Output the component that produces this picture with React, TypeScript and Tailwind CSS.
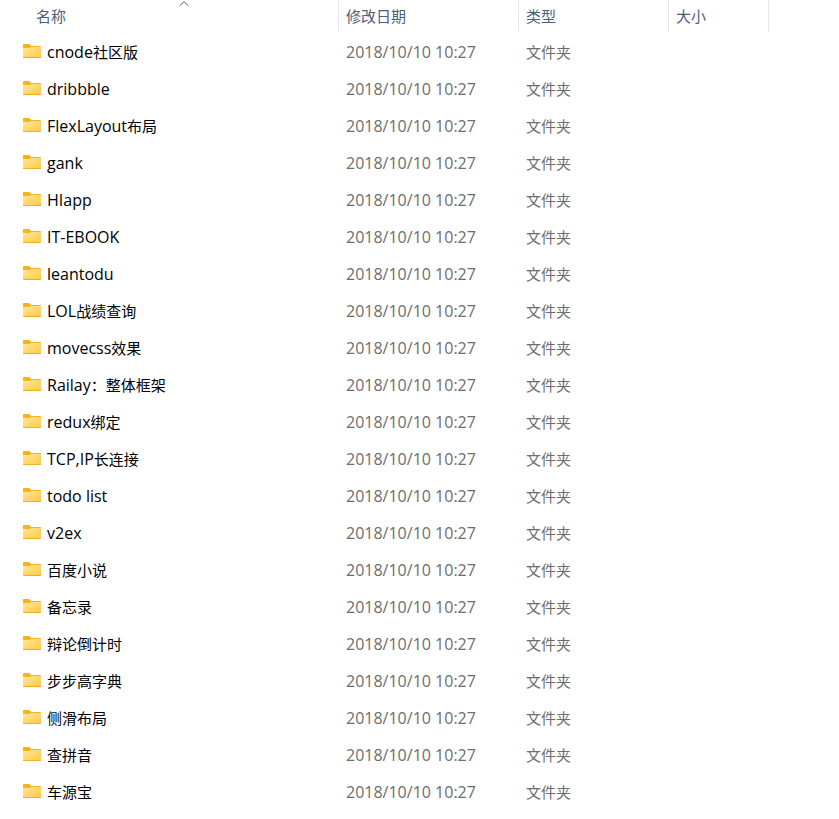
const folders = [
  "cnode社区版",
  "dribbble",
  "FlexLayout布局",
  "gank",
  "HIapp",
  "IT-EBOOK",
  "leantodu",
  "LOL战绩查询",
  "movecss效果",
  "Railay：整体框架",
  "redux绑定",
  "TCP,IP长连接",
  "todo list",
  "v2ex",
  "百度小说",
  "备忘录",
  "辩论倒计时",
  "步步高字典",
  "侧滑布局",
  "查拼音",
  "车源宝",
];

const columns = [
  { label: "名称", inset: "pl-9" },
  { label: "修改日期", inset: "pl-[7px]" },
  { label: "类型", inset: "pl-[7px]" },
  { label: "大小", inset: "pl-[7px]" },
];

function FolderIcon() {
  return (
    <svg width="18" height="14" viewBox="0 0 18 14" className="mb-px shrink-0" aria-hidden="true">
      <defs>
        <linearGradient id="folder-front" x1="0" y1="0" x2="1" y2="1">
          <stop offset="0" stopColor="#ffe8a0" />
          <stop offset="1" stopColor="#ffc93a" />
        </linearGradient>
      </defs>
      <path d="M0 .8Q0 0 .8 0H5.8Q6.4 0 6.9 .5L8.4 2H17.3Q18 2 18 2.8V6H0Z" fill="#f6b31c" />
      <path d="M0 4H6.2Q6.8 4 7.3 3.5Q7.8 3 8.6 3H18V13.2Q18 14 17.2 14H.8Q0 14 0 13.2Z" fill="url(#folder-front)" />
      <path d="M0 13H18V13.2Q18 14 17.2 14H.8Q0 14 0 13.2Z" fill="#eeb02c" />
    </svg>
  );
}

/* Latin runs are set one pixel larger than Chinese runs so both look the same size. */
function MixedText({ text }: { text: string }) {
  const runs = text.match(/[\x20-\x7e]+|[^\x20-\x7e]+/g) ?? [];
  return (
    <span className="whitespace-pre">
      {runs.map((run, i) => (
        <span key={i} className={/^[\x20-\x7e]/.test(run) ? "text-[16px]" : "text-[15px]"}>
          {run}
        </span>
      ))}
    </span>
  );
}

export default function App() {
  return (
    <main className="min-h-screen overflow-hidden bg-white font-['Open_Sans','Noto_Sans_CJK_SC',sans-serif] text-[15px] leading-5 text-black">
      <table className="w-full table-fixed border-collapse text-left" lang="zh-CN">
        <colgroup>
          <col className="w-[339px]" />
          <col className="w-[180px]" />
          <col className="w-[150px]" />
          <col className="w-[100px]" />
          <col />
        </colgroup>
        <thead>
          <tr>
            {columns.map((column, i) => (
              <th
                key={column.label}
                scope="col"
                aria-sort={i === 0 ? "ascending" : undefined}
                className="p-0 pb-px align-top font-normal"
              >
                <button
                  type="button"
                  className={`relative flex h-8 w-full items-center border-r border-[#e5e5e5] text-[#4c607a] ${column.inset}`}
                >
                  {column.label}
                  {i === 0 && (
                    <svg
                      width="10"
                      height="6"
                      viewBox="0 0 10 6"
                      className="absolute top-px right-[149px]"
                      fill="none"
                      stroke="#5a5a5a"
                      aria-hidden="true"
                    >
                      <path d="M.5 5L5 .7L9.5 5" />
                    </svg>
                  )}
                </button>
              </th>
            ))}
            <td />
          </tr>
        </thead>
        <tbody>
          {folders.map((name) => (
            <tr key={name} className="h-[37px]">
              <td className="p-0 pl-[23px]">
                <div className="flex items-center gap-1.5">
                  <FolderIcon />
                  <MixedText text={name} />
                </div>
              </td>
              <td className="p-0 pl-[7px] text-[16px] text-[#6d6d6d]">2018/10/10 10:27</td>
              <td className="p-0 pl-[7px] text-[#6d6d6d]">文件夹</td>
              <td className="p-0" />
              <td className="p-0" />
            </tr>
          ))}
        </tbody>
      </table>
    </main>
  );
}
